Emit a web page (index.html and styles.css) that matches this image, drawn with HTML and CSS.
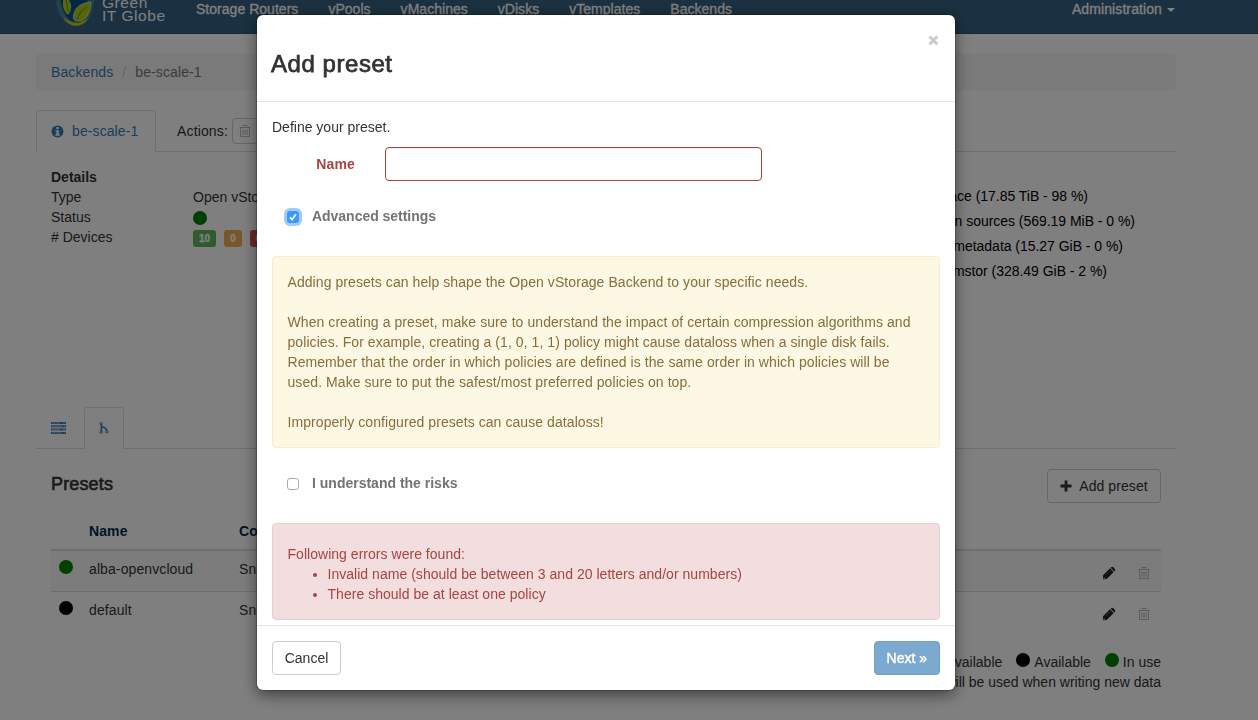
FILE: index.html
```
<!DOCTYPE html>
<html lang="en">
<head>
<meta charset="utf-8">
<title>Add preset</title>
<link rel="stylesheet" href="styles.css">
</head>
<body>
<svg class="defs" width="0" height="0">
  <symbol id="trash" viewBox="0 0 12 14"><path d="M4 2.500V1.500h4v1M.5 3.500h11M1.500 3.500v9h9v-9M4 5.500v5.500M6 5.500v5.500M8 5.500v5.500" fill="none" stroke="currentColor" stroke-width=".8"/></symbol>
  <symbol id="pencil" viewBox="0 0 14 14"><path d="M1 9.300 8 2.300 11.700 6l-7 7L1 13.300zM9 1.400q1-1 2.100-.3l1.800 1.800q.9 1-.1 2.100l-.4.4-3.700-3.700z" fill="currentColor"/><path d="M1.800 11v1.400h1.400zM3.500 9.200l5-5" fill="#ddd" stroke="#999" stroke-width=".5"/></symbol>
</svg>
<div class="page">
  <nav class="navbar">
    <div class="brand">
      <svg class="logo" width="46" height="40" viewBox="0 0 46 40">
        <path d="M5 8Q4 34 26 38q15-1 17-26" fill="#4d8294"/>
        <path d="M8 0Q10 32 24 34q12-3 13-24L34 0z" fill="#074f92"/>
        <path d="M12 13Q11 22 17 27q6-7 1-15L14 0z" fill="#b6d020"/>
        <path d="M40 14Q26 15 23 25q-2 7 2 8 14 1 15-19z" fill="#b2c90e" stroke="#d8eed0" stroke-width=".7"/>
        <path d="M12 29q8 6 15 6l10-4q-5 7-13 7-8-1-12-9z" fill="#c6cd13"/>
        <path d="M15 10l2 14M26 32q3-10 10-13" fill="none" stroke="#468b25"/>
      </svg>
      <div class="brand-name"><span>Green</span><span>IT Globe</span></div>
    </div>
    <div class="nav-links"><span>Storage Routers</span><span>vPools</span><span>vMachines</span><span>vDisks</span><span>vTemplates</span><span>Backends</span></div>
    <div class="nav-admin">Administration<i class="caret"></i></div>
  </nav>
  <main class="container">
    <div class="breadcrumb"><a>Backends</a><span class="slash">/</span><span>be-scale-1</span></div>
    <div class="tabs">
      <div class="tab"><svg width="13" height="13" viewBox="0 0 13 13"><circle cx="6.500" cy="6.500" r="6" fill="currentColor"/><path d="M5.300 2h2.400v2H5.300zM4.400 5.200h3.400v4h1V10.700H4.400V9.200h1V6.600h-1z" fill="#fff"/></svg><span>be-scale-1</span></div>
      <div class="actions">Actions:<span class="btn-trash"><svg width="12" height="14"><use href="#trash"/></svg></span></div>
    </div>
    <section class="overview">
      <dl class="details">
        <dt><b>Details</b></dt><dd></dd>
        <dt>Type</dt><dd>Open vStorage Backend</dd>
        <dt>Status</dt><dd><i class="dot green"></i></dd>
        <dt># Devices</dt><dd class="labels"><span class="label ok">10</span><span class="label warn">0</span><span class="label bad">0</span></dd>
      </dl>
      <ul class="usage">
        <li class="free">Free space (17.85 TiB - 98 %)</li>
        <li class="unknown">Unknown sources (569.19 MiB - 0 %)</li>
        <li class="meta">Used metadata (15.27 GiB - 0 %)</li>
        <li class="vpool">vmstor (328.49 GiB - 2 %)</li>
      </ul>
    </section>
    <div class="subtabs">
      <div class="subtab"><svg width="15" height="12" viewBox="0 0 15 12"><path d="M0 1h15M0 4.300h15M0 7.600h15M0 10.900h15" stroke="currentColor" stroke-width="2"/><path d="M1 1h8M12 1h2M1 4.300h10M13 4.300h1M1 7.600h8M12 7.600h2M1 10.900h10M13 10.900h1" stroke="#fff" stroke-width=".5"/></svg></div>
      <div class="subtab active"><svg width="10" height="12" viewBox="0 0 10 12"><path d="M2.400 2v8M2.400 5q5 0 5.300 4" fill="none" stroke="currentColor" stroke-width="1.600"/><g fill="#fff" stroke="currentColor" stroke-width="1"><circle cx="2.200" cy="1.700" r="1.200"/><circle cx="2.200" cy="10.200" r="1.200"/><circle cx="7.800" cy="9.700" r="1.200"/></g></svg></div>
    </div>
    <section class="presets">
      <div class="presets-head"><h3>Presets</h3><button class="btn add"><svg width="12" height="12" viewBox="0 0 12 12"><path d="M6 .5v11M.5 6h11" stroke="currentColor" stroke-width="2.800"/></svg>Add preset</button></div>
      <div class="row head"><span></span><span>Name</span><span>Compression</span></div>
      <div class="row odd"><i class="dot green"></i><span>alba-openvcloud</span><span>Snappy</span><svg class="pen" width="14" height="14"><use href="#pencil"/></svg><svg class="bin" width="12" height="14"><use href="#trash"/></svg></div>
      <div class="row"><i class="dot black"></i><span>default</span><span>Snappy</span><svg class="pen" width="14" height="14"><use href="#pencil"/></svg><svg class="bin" width="12" height="14"><use href="#trash"/></svg></div>
      <div class="legend"><span><i class="dot grey"></i>Unavailable</span><span><i class="dot black"></i>Available</span><span><i class="dot green"></i>In use</span></div>
      <p class="note">will be used when writing new data</p>
    </section>
  </main>
</div>
<div class="backdrop">
  <div class="modal">
    <header class="modal-head"><h2>Add preset</h2><svg class="close" width="11" height="11" viewBox="0 0 11 11"><path d="M1.400 1.400l8 8M9.400 1.400l-8 8" stroke="#ccc" stroke-width="2.900"/></svg></header>
    <div class="modal-body">
      <p>Define your preset.</p>
      <div class="field"><label>Name</label><input type="text"></div>
      <div class="check first"><span class="box on"><svg width="12" height="12" viewBox="0 0 12 12"><path d="M3 6.300 5 8.600 9 3.200" fill="none" stroke="#fff" stroke-width="1.700"/></svg></span>Advanced settings</div>
      <div class="alert warning">Adding presets can help shape the Open vStorage Backend to your specific needs.<br><br>When creating a preset, make sure to understand the impact of certain compression algorithms and<br>policies. For example, creating a (1, 0, 1, 1) policy might cause dataloss when a single disk fails.<br>Remember that the order in which policies are defined is the same order in which policies will be<br>used. Make sure to put the safest/most preferred policies on top.<br><br>Improperly configured presets can cause dataloss!</div>
      <div class="check second"><span class="box"></span>I understand the risks</div>
      <div class="alert danger">Following errors were found:<ul><li>Invalid name (should be between 3 and 20 letters and/or numbers)</li><li>There should be at least one policy</li></ul></div>
    </div>
    <footer class="modal-foot"><button class="btn cancel">Cancel</button><button class="btn primary">Next »</button></footer>
  </div>
</div>
</body>
</html>
```
FILE: styles.css
```
* { box-sizing: border-box; }
body { margin: 0; height: 720px; overflow: hidden; background: #fff; color: #333; font: 14px/20px "Liberation Sans", Arial, sans-serif; white-space: nowrap; }
h2, h3, p, dl, dd, ul { margin: 0; }
.defs { position: absolute; }
.page { height: 720px; overflow: hidden; }
.navbar { height: 34px; padding: 0 83px 0 51px; display: flex; align-items: flex-start; background: #366180; border-bottom: 1px solid #2d536e; color: #fff; overflow: hidden; }
.nav-links, .nav-admin { -webkit-text-stroke: .3px; }
.brand { display: flex; width: 145px; height: 34px; }
.logo { margin-top: -12px; flex: none; }
.brand-name { display: flex; flex-direction: column; margin: -4px 0 0 5px; font: 15.500px/13px "Liberation Sans", Arial, sans-serif; }
.brand-name span { letter-spacing: .55px; }
.nav-links { display: flex; gap: 30px; margin-top: -1px; letter-spacing: .03px; }
.nav-admin { display: flex; align-items: center; margin: -1px 0 0 auto; letter-spacing: .1px; }
.caret { margin: 2px 0 0 5px; border: 4px solid transparent; border-top-color: #fff; border-bottom: 0; }
.container { width: 1140px; margin: 20px 0 0 36px; }
.breadcrumb { height: 36px; padding: 8px 15px; background: #f5f5f5; border-radius: 4px; color: #777; display: flex; letter-spacing: .1px; }
.breadcrumb a, .tab, .subtab { color: #337ab7; }
.slash { width: 22px; text-align: center; color: #ccc; }
.tabs { display: flex; height: 42px; margin-top: 20px; border-bottom: 1px solid #ddd; }
.tab { width: 120px; height: 42px; padding: 0 14px; display: flex; align-items: center; gap: 8px; border: 1px solid #ddd; border-bottom-color: #fff; border-radius: 4px 4px 0 0; background: #fff; }
.tab span { letter-spacing: .1px; }
.actions { display: flex; align-items: center; gap: 4px; height: 42px; margin-left: 21px; letter-spacing: .15px; }
.btn-trash { width: 26px; height: 26px; display: flex; align-items: center; justify-content: center; border: 1px solid #ccc; border-radius: 4px; color: #aaa; }
.overview { height: 255px; display: flex; justify-content: space-between; padding: 15px 0 0 15px; }
.details { display: grid; grid-template-columns: 142px 300px; grid-template-rows: repeat(4, 20px); }
.details dd { display: flex; align-items: center; }
.details dd .dot { margin-top: 1px; }
.dot { width: 14px; height: 14px; border-radius: 50%; flex: none; display: block; }
.green { background: #008000; }
.black { background: #000; }
.grey { background: #aaa; }
.details .labels { gap: 8px; padding-top: 3px; }
.label { height: 17px; padding: 0 6px; border-radius: 3px; color: #fff; font: bold 10px/17px "Liberation Sans", Arial, sans-serif; -webkit-text-stroke: .3px; }
.ok { background: #5cb85c; }
.warn { background: #f0ad4e; }
.bad { background: #d9534f; }
.usage { list-style: none; padding: 0; margin-top: 17px; color: #000; text-align: right; line-height: 25px; letter-spacing: -.03px; }
.free { padding-right: 88px; }
.unknown { padding-right: 41px; }
.meta { padding-right: 53px; }
.vpool { padding-right: 69px; }
.subtabs { display: flex; height: 42px; border-bottom: 1px solid #ddd; }
.subtab { width: 48px; height: 42px; padding-left: 15px; display: flex; align-items: center; }
.subtab.active { width: 40px; padding-left: 14px; border: 1px solid #ddd; border-bottom-color: #fff; border-radius: 4px 4px 0 0; background: #fff; }
.presets { padding: 20px 15px 0; }
.presets-head { display: flex; justify-content: space-between; align-items: flex-start; height: 48px; }
h3 { font-size: 18px; font-weight: normal; line-height: 30px; letter-spacing: .15px; -webkit-text-stroke: .6px; }
.btn { height: 34px; padding: 0 12px; display: flex; align-items: center; justify-content: center; gap: 8px; border: 1px solid #ccc; border-radius: 4px; background: #fff; color: #333; font: 14px/20px "Liberation Sans", Arial, sans-serif; }
.btn.add { width: 114px; padding: 0; gap: 7px; letter-spacing: .08px; }
.row { display: grid; grid-template-columns: 30px 150px 1fr 35px 23px; height: 41px; padding: 8px 0 0 8px; border-top: 1px solid #ddd; letter-spacing: .1px; }
.row.head { height: 32px; padding-top: 4px; border: 0; color: #002b49; font-weight: bold; }
.row.odd { height: 42px; border-top-width: 2px; background: #f9f9f9; }
.row .dot { margin-top: 1px; }
.pen { margin: 7px 0 0 -1px; color: #222; }
.bin { margin-top: 7px; color: #aaa; }
.legend { display: flex; justify-content: flex-end; gap: 14px; margin-top: 20px; }
.legend span { display: flex; gap: 4px; }
.legend .dot { margin-top: 1px; }
.note { text-align: right; }
.backdrop { position: fixed; inset: 0; padding: 15px 0 0 257px; background: rgba(0,0,0,.5); }
.modal { width: 698px; height: 675px; display: flex; flex-direction: column; border-radius: 6px; background: #fff; box-shadow: 0 5px 15px rgba(0,0,0,.5), 0 0 0 1px rgba(0,0,0,.2); }
.modal-head { height: 87px; padding: 20px 16px 0 14px; display: flex; justify-content: space-between; border-bottom: 1px solid #e5e5e5; }
h2 { margin-top: 14px; font-size: 24px; font-weight: normal; line-height: 30px; letter-spacing: .55px; -webkit-text-stroke: .75px; }
.modal-body { height: 523px; padding: 15px 15px 0; }
.field { display: flex; align-items: center; gap: 30px; margin-top: 10px; color: #a94442; font-weight: bold; }
.field label { width: 83px; text-align: right; letter-spacing: .15px; }
.field input { width: 377px; height: 34px; border: 1px solid #a94442; border-radius: 4px; box-shadow: inset 0 1px 1px rgba(0,0,0,.075); background: #fff; }
.check { display: flex; align-items: center; gap: 13px; height: 20px; padding-left: 15px; color: #737373; font-weight: bold; }
.check.first { margin-top: 25px; letter-spacing: -.03px; }
.check.second { margin-top: 25px; }
.box { width: 12px; height: 12px; margin-top: 1px; border: 1px solid #aaa; border-radius: 3px; background: #fff; }
.box.on { border: 0; background: #3b99fc; box-shadow: 0 0 0 3px #9dccfd; display: flex; }
.alert { margin-top: 30px; padding: 15px 14.500px; border: 1px solid; border-radius: 4px; }
.warning { height: 192px; border-color: #faebcc; background: #fcf8e3; color: #8a6d3b; letter-spacing: .07px; }
.danger { height: 97px; padding-top: 20px; border-color: #ebccd1; background: #f2dede; color: #a94442; letter-spacing: .03px; }
.danger ul { padding-left: 40px; }
.modal-foot { height: 65px; padding: 15px; display: flex; justify-content: space-between; border-top: 1px solid #e5e5e5; }
.cancel { width: 69px; padding: 0; }
.primary { border-color: #779fc3; background: #7ca9d0; color: #fff; -webkit-text-stroke: .4px; }
```
